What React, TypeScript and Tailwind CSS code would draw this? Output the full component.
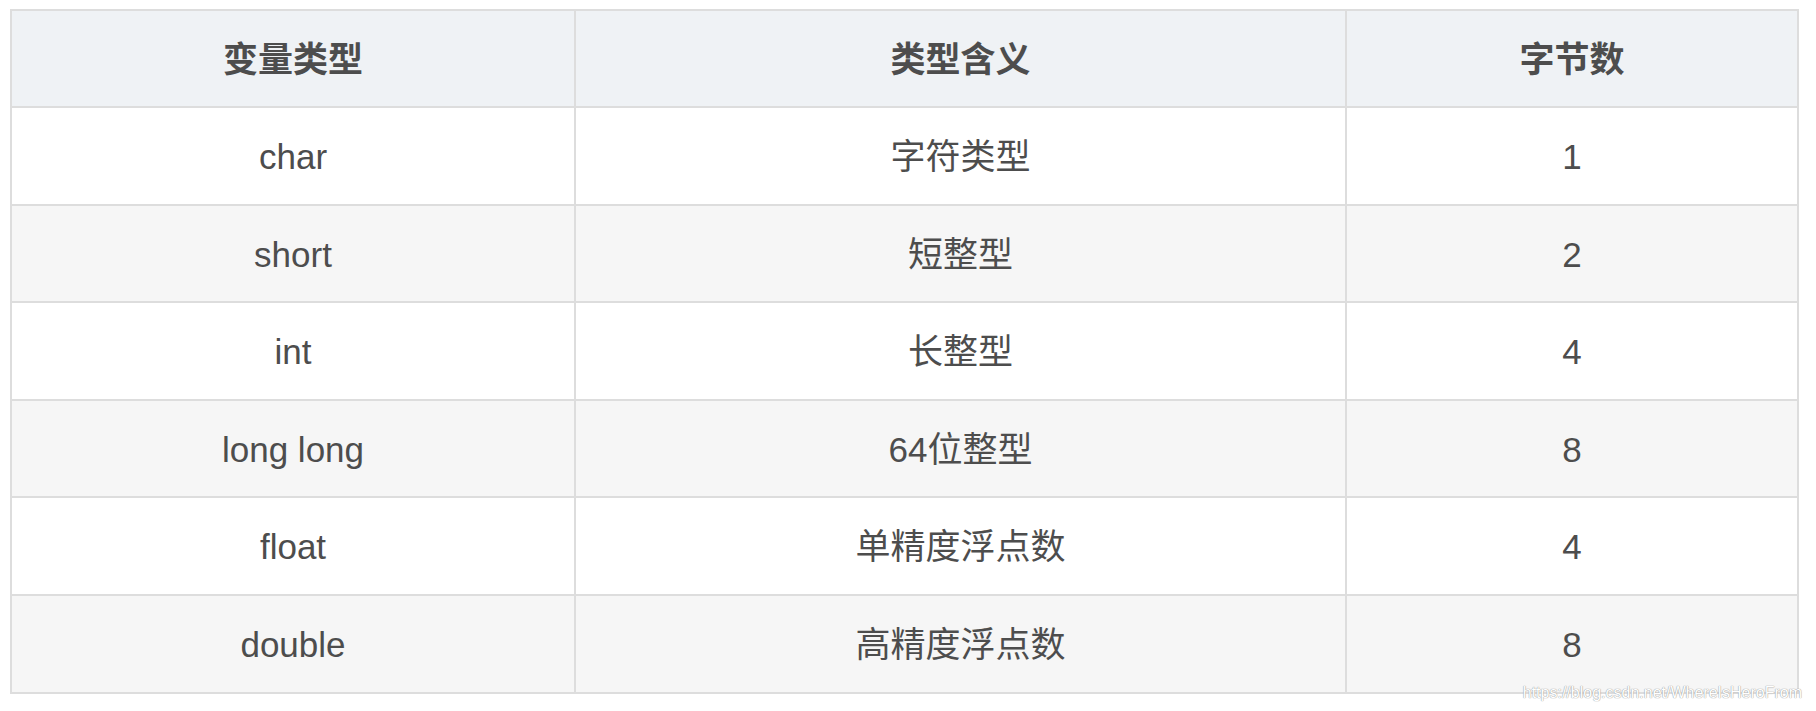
import React from "react";

const rows: [string, string, string][] = [
  ["char", "字符类型", "1"],
  ["short", "短整型", "2"],
  ["int", "长整型", "4"],
  ["long long", "64位整型", "8"],
  ["float", "单精度浮点数", "4"],
  ["double", "高精度浮点数", "8"],
];

export default function App() {
  return (
    <div className="w-[1816px] h-[711px] bg-white relative overflow-hidden [font-family:'Liberation_Sans','Noto_Sans_CJK_SC',sans-serif] text-[#4d4d4d]">
      <div className="pt-[9px] pl-[10px]">
        <div className="grid grid-cols-[564px_771px_452px] w-[1789px] border-l-2 border-t-2 border-[#dddddd]">
          {["变量类型", "类型含义", "字节数"].map((h) => (
            <div
              key={h}
              className="h-[97px] pt-[3px] flex items-center justify-center bg-[#eff2f5] border-r-2 border-b-2 border-[#dddddd] font-bold text-[35px]"
            >
              {h}
            </div>
          ))}
          {rows.map((r, i) =>
            r.map((c, j) => (
              <div
                key={i + "-" + j}
                className={
                  "h-[97.6px] pt-[3px] flex items-center justify-center border-r-2 border-b-2 border-[#dddddd] text-[35px] " +
                  (i % 2 === 0 ? "bg-white" : "bg-[#f6f6f6]")
                }
              >
                {c}
              </div>
            ))
          )}
        </div>
      </div>
      <div className="absolute right-[14px] top-[681px] text-[16px] text-white [text-shadow:0_0_1px_#9a9a9a,0_0_1px_#9a9a9a] [font-family:'Liberation_Sans',sans-serif]">
        https://blog.csdn.net/WhereIsHeroFrom
      </div>
    </div>
  );
}
